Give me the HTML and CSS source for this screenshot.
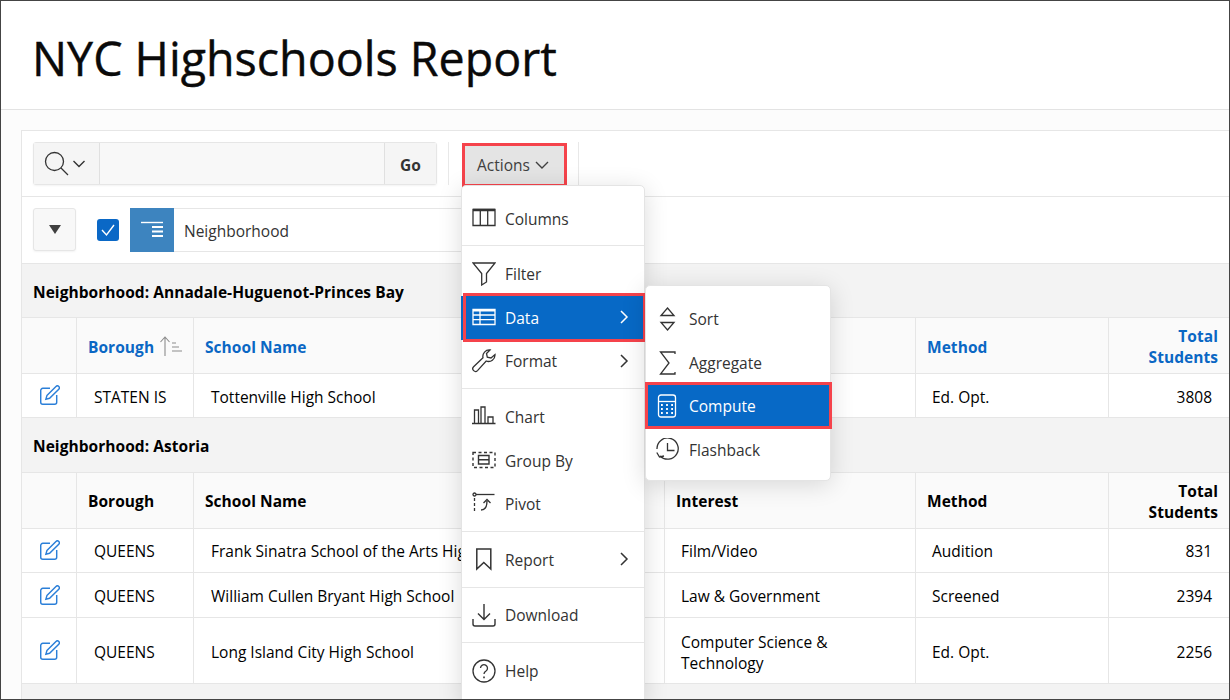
FILE: index.html
```html
<!DOCTYPE html>
<html lang="en">
<head>
<meta charset="utf-8">
<title>NYC Highschools Report</title>
<link rel="stylesheet" href="styles.css">
</head>
<body>
<div class="frame">
  <header class="page-head"><h1>NYC Highschools Report</h1></header>
  <main class="content">
    <section class="report">
      <div class="toolbar">
        <div class="search">
          <div class="search-pick">
            <svg width="26" height="26" viewBox="0 0 26 26" fill="none" stroke="#333" stroke-width="1.3"><circle cx="10.5" cy="10.5" r="9"/><path d="M17 17l7 7"/></svg>
            <svg width="14" height="10" viewBox="0 0 14 10" fill="none" stroke="#333" stroke-width="1.4"><path d="M1.5 2l5.5 5.5L12.500 2"/></svg>
          </div>
          <div class="search-input"></div>
          <div class="search-go">Go</div>
        </div>
        <div class="tool-sep"><div class="actions">Actions
          <svg width="14" height="10" viewBox="0 0 14 10" fill="none" stroke="#404040" stroke-width="1.4"><path d="M1 2l6 6 6-6"/></svg>
        </div></div>
      </div>
      <div class="filters">
        <div class="toggle"><span class="tri"></span></div>
        <div class="check"><svg width="16" height="14" viewBox="0 0 16 14" fill="none" stroke="#fff" stroke-width="1.4"><path d="M2 7l4.500 5L14 2"/></svg></div>
        <div class="field">
          <div class="field-icon"><svg width="24" height="18" viewBox="0 0 24 18" fill="none" stroke="#fff"><path d="M1 1.500h22" stroke-width="1.400"/><path d="M12 6h11M12 10.500h11M12 15h11" stroke-width="1.800"/></svg></div>
          <div class="field-text">Neighborhood</div>
        </div>
      </div>

      <div class="group-title">Neighborhood: Annadale-Huguenot-Princes Bay</div>
      <table class="grid">
        <colgroup><col class="c1"><col class="c2"><col class="c3"><col class="c4"><col class="c5"><col class="c6"></colgroup>
        <thead class="links">
          <tr>
            <th></th>
            <th><span class="sorted">Borough
              <svg class="sort-icon" width="24" height="20" viewBox="0 0 24 20" fill="none" stroke="#8c8c8c" stroke-width="1.100"><path d="M6 20V1M1.500 6L6 1l4.500 5"/><path d="M13 7h4M13 11h7M13 15h10"/></svg></span></th>
            <th>School Name</th>
            <th></th>
            <th>Method</th>
            <th class="num">Total<br>Students</th>
          </tr>
        </thead>
        <tbody>
          <tr class="row-1">
            <td class="edit"><svg class="pen" viewBox="0.3 0.3 19.4 19.4" fill="none" stroke="#2b7fd8" stroke-width="1.400"><path d="M10 3.500H3a2 2 0 0 0-2 2V17a2 2 0 0 0 2 2h11.500a2 2 0 0 0 2-2V10"/><path d="M7 10.500L15.800 1.700a1.900 1.900 0 0 1 2.700 2.700L9.600 13.200l-3.600.9z"/></svg></td>
            <td>STATEN IS</td><td>Tottenville High School</td><td></td><td>Ed. Opt.</td><td class="num">3808</td>
          </tr>
        </tbody>
      </table>

      <div class="group-title second">Neighborhood: Astoria</div>
      <table class="grid">
        <colgroup><col class="c1"><col class="c2"><col class="c3"><col class="c4"><col class="c5"><col class="c6"></colgroup>
        <thead>
          <tr>
            <th></th><th>Borough</th><th>School Name</th><th>Interest</th><th>Method</th><th class="num">Total<br>Students</th>
          </tr>
        </thead>
        <tbody>
          <tr class="row-2">
            <td class="edit"><svg class="pen" viewBox="0.3 0.3 19.4 19.4" fill="none" stroke="#2b7fd8" stroke-width="1.400"><path d="M10 3.500H3a2 2 0 0 0-2 2V17a2 2 0 0 0 2 2h11.500a2 2 0 0 0 2-2V10"/><path d="M7 10.500L15.800 1.700a1.900 1.900 0 0 1 2.700 2.700L9.600 13.200l-3.600.9z"/></svg></td>
            <td>QUEENS</td><td><span class="clip">Frank Sinatra School of the Arts High School</span></td><td>Film/Video</td><td>Audition</td><td class="num">831</td>
          </tr>
          <tr class="row-3">
            <td class="edit"><svg class="pen" viewBox="0.3 0.3 19.4 19.4" fill="none" stroke="#2b7fd8" stroke-width="1.400"><path d="M10 3.500H3a2 2 0 0 0-2 2V17a2 2 0 0 0 2 2h11.500a2 2 0 0 0 2-2V10"/><path d="M7 10.500L15.800 1.700a1.900 1.900 0 0 1 2.700 2.700L9.600 13.200l-3.600.9z"/></svg></td>
            <td>QUEENS</td><td>William Cullen Bryant High School</td><td>Law &amp; Government</td><td>Screened</td><td class="num">2394</td>
          </tr>
          <tr class="row-4">
            <td class="edit"><svg class="pen" viewBox="0.3 0.3 19.4 19.4" fill="none" stroke="#2b7fd8" stroke-width="1.400"><path d="M10 3.500H3a2 2 0 0 0-2 2V17a2 2 0 0 0 2 2h11.500a2 2 0 0 0 2-2V10"/><path d="M7 10.500L15.800 1.700a1.900 1.900 0 0 1 2.700 2.700L9.600 13.200l-3.600.9z"/></svg></td>
            <td>QUEENS</td><td>Long Island City High School</td><td>Computer Science &amp;<br>Technology</td><td>Ed. Opt.</td><td class="num">2256</td>
          </tr>
        </tbody>
      </table>
      <div class="report-foot"></div>

      <nav class="menu main-menu">
        <div class="menu-group first">
          <div class="item"><svg class="ic" viewBox="0 0 24 24" fill="none" stroke="#333" stroke-width="1.300"><path d="M1 2.500h22v16H1zM8.300 2.500v16M15.700 2.500v16"/><path d="M1 3h22" stroke-width="2.500"/></svg>Columns</div>
        </div>
        <div class="menu-group">
          <div class="item"><svg class="ic" viewBox="0 0 24 24" fill="none" stroke="#333" stroke-width="1.300"><path d="M1 1h22l-8.500 10.500v8.500l-4.800 3v-11.500z"/></svg>Filter</div>
          <div class="item active flagged"><svg class="ic" viewBox="0 0 24 24" fill="none" stroke="#fff" stroke-width="1.300"><path d="M1 3.500h22v15H1z"/><path d="M1 4.300h22" stroke-width="2.400"/><path d="M1 9h22M1 13.700h22M8 4.500v14"/></svg>Data<svg class="chev" viewBox="0 0 10 16" fill="none" stroke="#fff" stroke-width="1.500"><path d="M2 2l6 6-6 6"/></svg></div>
          <div class="item"><svg class="ic" viewBox="0 0 24 24" fill="none" stroke="#333" stroke-width="1.300"><path d="M23 5.500a6.500 6.500 0 0 1-8.800 6.500L5.500 21.600a2.700 2.700 0 0 1-3.900-3.800L11 8.800A6.500 6.500 0 0 1 18 1l-3.500 3.500.8 3.700 3.700.8z"/></svg>Format<svg class="chev" viewBox="0 0 10 16" fill="none" stroke="#333" stroke-width="1.500"><path d="M2 2l6 6-6 6"/></svg></div>
        </div>
        <div class="menu-group">
          <div class="item"><svg class="ic" viewBox="0 0 24 24" fill="none" stroke="#333" stroke-width="1.300"><path d="M0 18.500h23.500M2.500 18.500V5h4v13.500M9 18.500V2h4v16.500M16 18.500V12h5v6.500"/></svg>Chart</div>
          <div class="item"><svg class="ic" viewBox="0 0 24 24" fill="none" stroke="#333" stroke-width="1.400"><path d="M1 3.500h22v15H1z" stroke-dasharray="3 2.500"/><path d="M6.500 6.500H17v8.500H6.500zM6.500 10.700H17"/></svg>Group By</div>
          <div class="item"><svg class="ic" viewBox="0 0 24 24" fill="none" stroke="#333" stroke-width="1.300"><circle cx="2.500" cy="2.500" r="1.500"/><path d="M2.500 6v15" stroke-dasharray="3 2"/><path d="M4 2.500h18.500"/><path d="M9 18c4 0 6-4 6-9M11.500 11L15 7.500l3.500 3.500"/></svg>Pivot</div>
        </div>
        <div class="menu-group">
          <div class="item"><svg class="ic" viewBox="0 0 24 24" fill="none" stroke="#333" stroke-width="1.500"><path d="M4.800 1h14v20l-7-6.500-7 6.500z"/></svg>Report<svg class="chev" viewBox="0 0 10 16" fill="none" stroke="#333" stroke-width="1.500"><path d="M2 2l6 6-6 6"/></svg></div>
        </div>
        <div class="menu-group">
          <div class="item"><svg class="ic" viewBox="0 0 24 24" fill="none" stroke="#333" stroke-width="1.400"><path d="M12 1v15M6 10.500l6 6 6-6"/><path d="M1 16v5a2 2 0 0 0 2 2h18a2 2 0 0 0 2-2v-5"/></svg>Download</div>
        </div>
        <div class="menu-group last">
          <div class="item"><svg class="ic" viewBox="0 0 24 24" fill="none" stroke="#333" stroke-width="1.300"><circle cx="12" cy="12" r="11"/><path d="M8.500 9a3.500 3.500 0 1 1 5.500 3c-1.300.8-2 1.500-2 3"/><path d="M12 17.500v1.800" stroke-width="1.600"/></svg>Help</div>
        </div>
      </nav>

      <nav class="menu sub-menu">
        <div class="item"><svg class="ic" viewBox="0 0 24 24" fill="none" stroke="#333" stroke-width="1.300"><path d="M11.500 1l6.500 7.500H5zM11.500 23l6.500-7.500H5z"/></svg>Sort</div>
        <div class="item"><svg class="ic" viewBox="0 0 24 24" fill="none" stroke="#333" stroke-width="1.300"><path d="M19 3V1H4.500l8.500 11-8.500 11H19v-2"/></svg>Aggregate</div>
        <div class="item active flagged"><svg class="ic" viewBox="0 0 24 24" fill="none" stroke="#fff" stroke-width="1.300"><rect x="2.500" y="1" width="17" height="22" rx="2.500"/><path d="M2.500 7.500h17"/><path d="M5 11h1.800M10.100 11h1.800M15.200 11h1.800M5 15h1.800M10.100 15h1.800M15.200 15h1.800M5 19h1.800M10.100 19h1.800M15.200 19h1.800" stroke-width="2"/></svg>Compute</div>
        <div class="item"><svg class="ic" viewBox="0 0 24 24" fill="none" stroke="#333" stroke-width="1.300"><path d="M4 18A10.600 10.600 0 1 0 1 11"/><path d="M11.500 5v7.500h7"/><path d="M.8 14.500L3.500 19l4.500-1"/></svg>Flashback</div>
      </nav>
    </section>
  </main>
</div>
</body>
</html>
```

FILE: styles.css
```css
* { box-sizing: border-box; }
html, body { margin: 0; padding: 0; background: #fff; }
body { font-family: "Open Sans", "Liberation Sans", sans-serif; font-size: 15.5px; color: #000; }
.frame { width: 1230px; height: 700px; overflow: hidden; border: 1px solid #444; display: flex; flex-direction: column; }
.page-head { height: 109px; background: #fff; border-bottom: 1px solid #e3e3e3; padding: 7px 0 0 31px; flex: none; display: flex; align-items: center; }
h1 { margin: 0; font-size: 46.6px; font-weight: 500; -webkit-text-stroke: .4px #0a0a0a; line-height: 1; color: #0a0a0a; white-space: nowrap; }
.content { padding: 20px 0 0 20px; flex: 1; min-height: 0; background: #fcfcfc; }
.report { position: relative; border-left: 1px solid #e6e6e6; height: 100%; background: #f3f3f3; }

.toolbar { height: 67px; background: #fff; border-top: 1px solid #e6e6e6; border-bottom: 1px solid #e6e6e6; padding: 11px 0 0 11px; display: flex; }
.search { width: 404px; height: 43px; display: flex; border: 1px solid #e6e6e6; border-radius: 3px; background: #f8f8f8; box-shadow: 0 1px 2px rgba(0,0,0,.05); }
.search-pick { width: 66px; display: flex; align-items: center; padding-left: 10px; gap: 2px; border-right: 1px solid #e0e0e0; background: #f5f5f5; }
.search-input { flex: 1; }
.search-go { width: 52px; border-left: 1px solid #e0e0e0; background: #f5f5f5; font-weight: 700; color: #333; display: flex; align-items: center; justify-content: center; padding-top: 3px; }
.tool-sep { margin-left: 11px; width: 131px; height: 43px; border-left: 1px solid #e8e8e8; border-right: 1px solid #e8e8e8; padding-left: 13px; }
.actions { width: 105px; height: 44px; background: #e4e4e4; border: 3px solid #f5434b; margin-top: 1px; color: #404040; display: flex; align-items: center; padding-left: 12px; gap: 5px; }

.filters { height: 67px; background: #fff; border-bottom: 1px solid #e6e6e6; padding: 11px 0 0 11px; display: flex; align-items: flex-start; }
.toggle { width: 43px; height: 43px; border: 1px solid #e6e6e6; border-radius: 3px; background: #f8f8f8; display: flex; align-items: center; justify-content: center; box-shadow: 0 1px 2px rgba(0,0,0,.05); }
.tri { width: 0; height: 0; border-left: 6px solid transparent; border-right: 6px solid transparent; border-top: 9px solid #404040; }
.check { width: 22px; height: 22px; margin: 11px 11px 0 21px; background: #0a68c6; border-radius: 3px; display: flex; align-items: center; justify-content: center; }
.field { display: flex; width: 400px; height: 44px; border: 1px solid #e6e6e6; border-left: 0; }
.field-icon { width: 44px; height: 44px; margin-top: -1px; background: #3d84bf; display: flex; align-items: center; justify-content: center; flex: none; }
.field-text { padding-left: 10px; line-height: 45px; color: #333; }

.group-title { height: 54px; background: #f3f3f3; border-bottom: 1px solid #e6e6e6; padding-left: 11px; font-weight: 700; line-height: 57px; letter-spacing: .05px; }
.group-title.second { height: 55px; }

.grid { border-collapse: separate; border-spacing: 0; table-layout: fixed; width: 1208px; background: #fff; }
.c1 { width: 55px; } .c2 { width: 117px; } .c3 { width: 471px; } .c4 { width: 251px; } .c5 { width: 193px; } .c6 { width: 121px; }
.grid th { height: 56px; background: #fafafa; text-align: left; font-weight: 700; padding: 2px 11px 0; border-right: 1px solid #e6e6e6; border-bottom: 1px solid #e6e6e6; line-height: 21px; letter-spacing: .05px; white-space: nowrap; }
.grid td { padding: 2px 17px 0; border-right: 1px solid #e6e6e6; border-bottom: 1px solid #e6e6e6; line-height: 21px; white-space: nowrap; overflow: hidden; }
.grid td:nth-child(n+4) { padding-left: 16px; }
.grid th.num { text-align: right; padding-right: 12px; }
.grid td.num { text-align: right; padding-right: 18px; }
.grid th:last-child, .grid td:last-child { border-right: 0; }
.grid .edit { padding: 0; text-align: center; }
.links th { padding-top: 4px; color: #0a67c4; }
.links th.num { padding-top: 2px; }
.row-1 td { height: 44px; padding-top: 4px; }
.row-2 td { height: 44px; }
.row-3 td { height: 45px; }
.row-4 td { height: 66px; padding-top: 4px; }
.clip { display: block; width: 250px; overflow: hidden; }
.pen { width: 20px; height: 20px; display: inline-block; vertical-align: middle; margin-top: -3px; margin-left: 2px; }
.sorted { display: inline-flex; align-items: center; gap: 5px; }
.sort-icon { margin-top: -4px; }

.menu { position: absolute; background: #fff; border: 1px solid #e4e4e4; border-radius: 5px; box-shadow: 0 4px 24px rgba(0,0,0,.14); color: #333; }
.main-menu { left: 439px; top: 55px; width: 184px; height: 520px; z-index: 2; }
.sub-menu { left: 623px; top: 155px; width: 186px; height: 196px; padding-top: 11px; z-index: 3; }
.menu-group { padding: 6px 0 4.75px; border-bottom: 1px solid #e6e6e6; }
.menu-group.first { padding: 11px 0 4.25px; }
.menu-group.last { border-bottom: 0; }
.item { position: relative; height: 43.75px; display: flex; align-items: center; padding-left: 10px; white-space: nowrap; }
.ic { width: 24px; height: 24px; margin-right: 9px; flex: none; }
.chev { width: 10px; height: 16px; position: absolute; right: 15px; top: 13px; }
.item.active { background: #0769c6; color: #fff; }
.main-menu .item.active { margin-left: -1px; padding-left: 11px; }
.main-menu .flagged::after { content: ""; position: absolute; left: 2px; right: -2px; top: -3px; bottom: -2px; border: 3px solid #f5434b; }
.sub-menu .flagged::after { content: ""; position: absolute; left: -1px; right: -2px; top: -3px; bottom: -1px; border: 3px solid #f5434b; }
```
